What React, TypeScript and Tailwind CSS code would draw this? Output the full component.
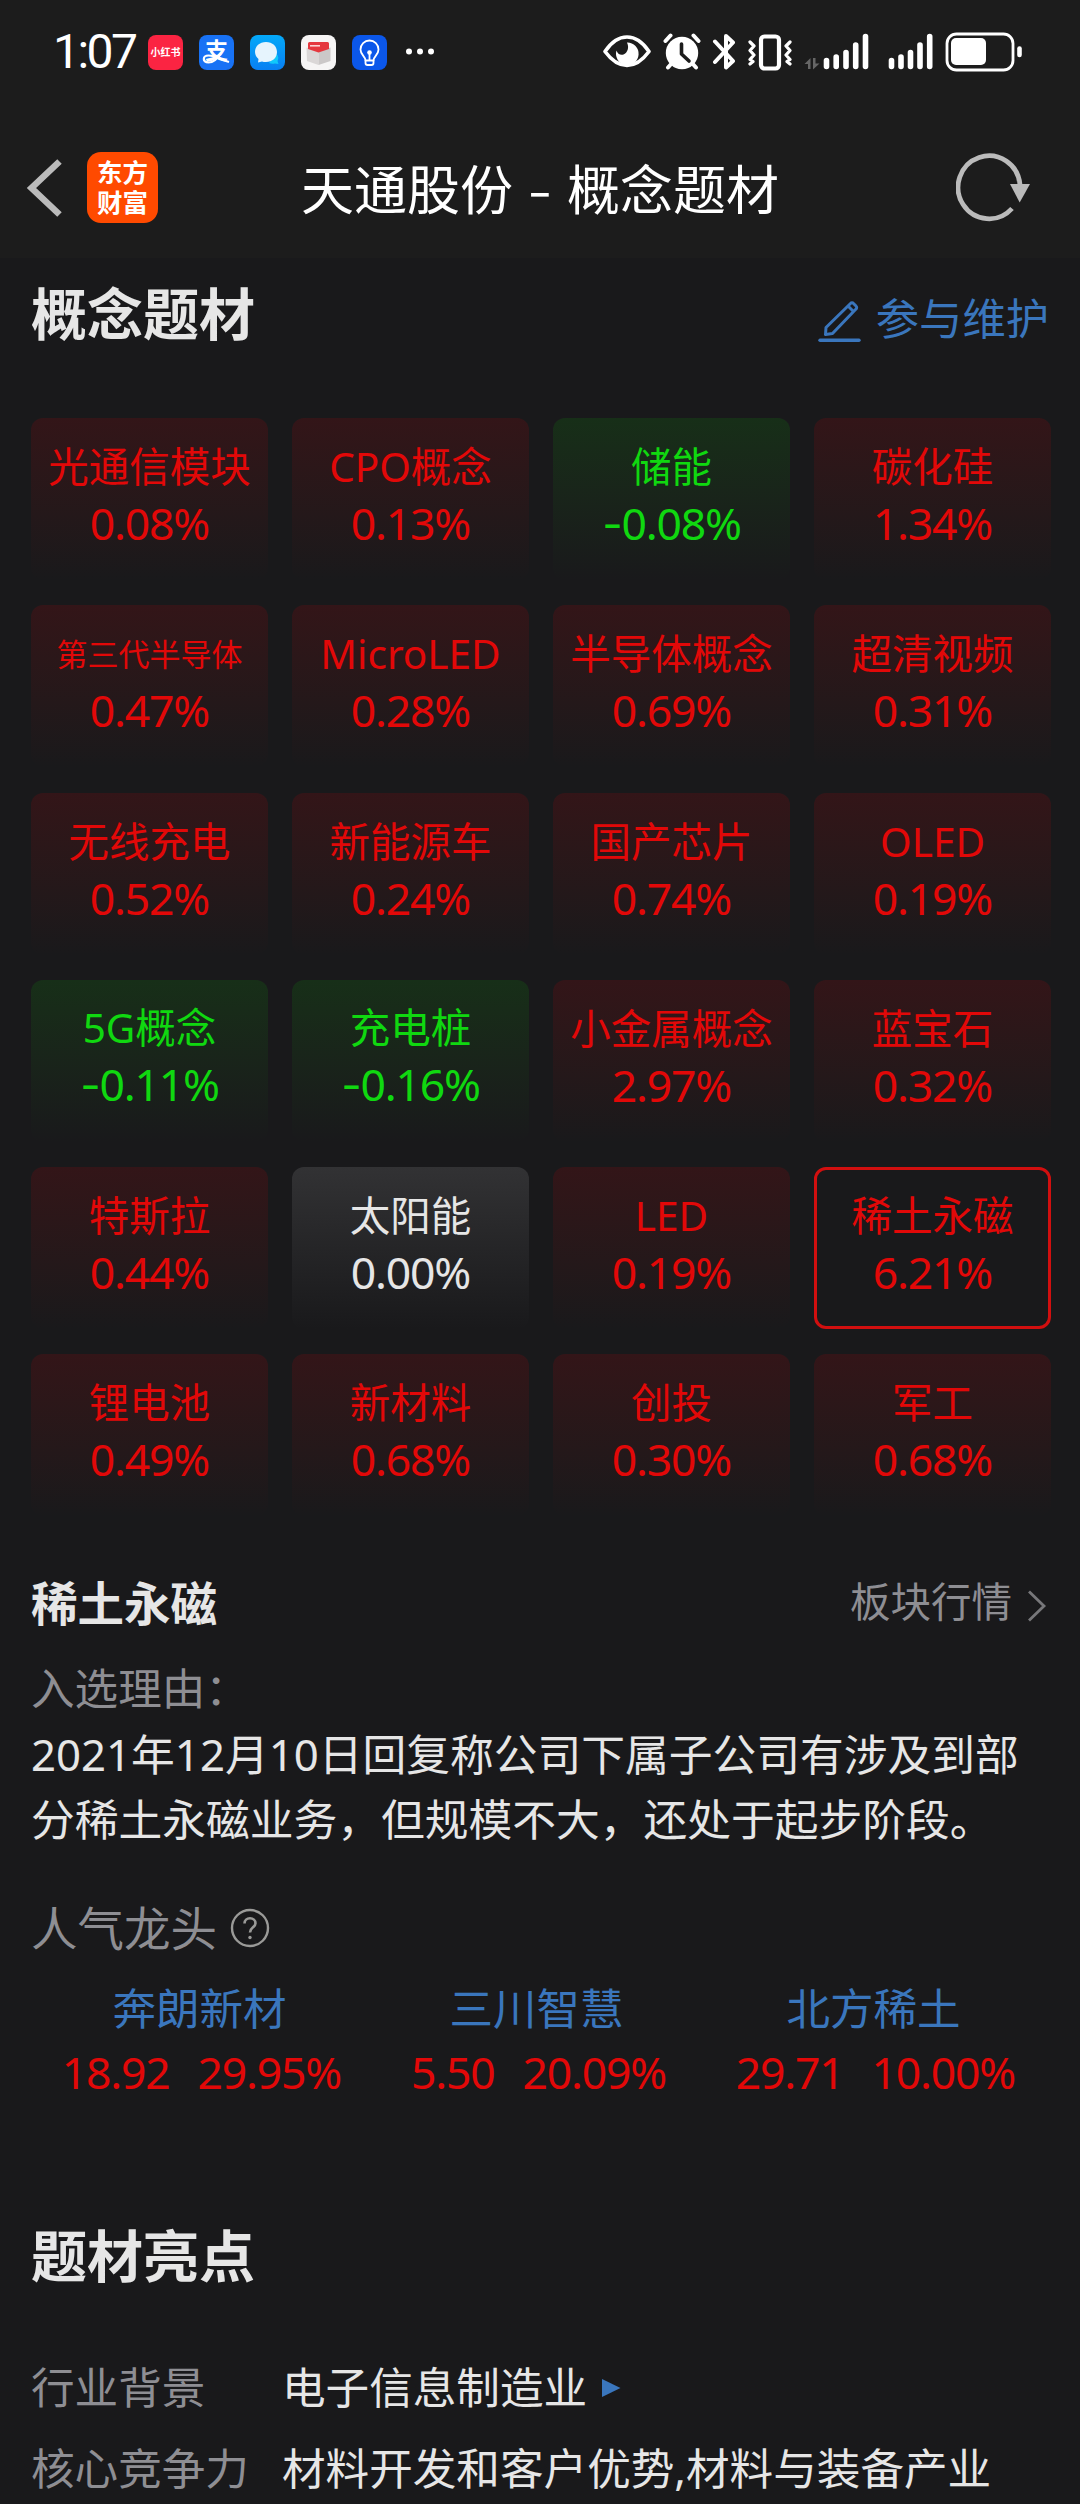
import React from "react";

type Concept = {
  name: string;
  change: string;
  small?: boolean;
  selected?: boolean;
};

const concepts: Concept[] = [
  { name: "光通信模块", change: "0.08%" },
  { name: "CPO概念", change: "0.13%" },
  { name: "储能", change: "-0.08%" },
  { name: "碳化硅", change: "1.34%" },
  { name: "第三代半导体", change: "0.47%", small: true },
  { name: "MicroLED", change: "0.28%" },
  { name: "半导体概念", change: "0.69%" },
  { name: "超清视频", change: "0.31%" },
  { name: "无线充电", change: "0.52%" },
  { name: "新能源车", change: "0.24%" },
  { name: "国产芯片", change: "0.74%" },
  { name: "OLED", change: "0.19%" },
  { name: "5G概念", change: "-0.11%" },
  { name: "充电桩", change: "-0.16%" },
  { name: "小金属概念", change: "2.97%" },
  { name: "蓝宝石", change: "0.32%" },
  { name: "特斯拉", change: "0.44%" },
  { name: "太阳能", change: "0.00%" },
  { name: "LED", change: "0.19%" },
  { name: "稀土永磁", change: "6.21%", selected: true },
  { name: "锂电池", change: "0.49%" },
  { name: "新材料", change: "0.68%" },
  { name: "创投", change: "0.30%" },
  { name: "军工", change: "0.68%" },
];

const leaders = [
  { name: "奔朗新材", price: "18.92", change: "29.95%" },
  { name: "三川智慧", price: "5.50", change: "20.09%" },
  { name: "北方稀土", price: "29.71", change: "10.00%" },
];

const cardColor = ({ change, selected }: Concept) => {
  if (selected) return "border-[3px] border-[#d20f0f] text-[#e20808]";
  if (change.startsWith("-"))
    return "bg-linear-to-b from-[#172f18] to-[#19191b] text-[#10d810]";
  if (change === "0.00%")
    return "bg-linear-to-b from-[#323234] to-[#19191b] text-[#e6e6e6]";
  return "bg-linear-to-b from-[#331518] to-[#19191b] text-[#e20808]";
};

const ConceptCard = (item: Concept) => (
  <div
    className={`flex h-[162px] flex-col items-center justify-center rounded-xl pb-[8px] whitespace-nowrap ${cardColor(item)}`}
  >
    <span
      className={`leading-[56px] ${item.small ? "text-[31px]" : "text-[40.5px]"}`}
    >
      {item.name}
    </span>
    <span className="text-[44.5px] leading-[56px] tracking-[-1.2px]">
      {item.change.startsWith("-") && <span className="font-[Inter]">-</span>}
      {item.change.replace("-", "")}
    </span>
  </div>
);

const AppIcons = () => (
  <div className="ml-[13px] flex items-center gap-4">
    <div className="flex size-[35px] items-center justify-center rounded-lg bg-[#fb2442] text-[10px] font-bold whitespace-nowrap text-white">
      小红书
    </div>
    <div className="relative flex size-[35px] items-start justify-center rounded-lg bg-[#1872f5] pt-[3px] text-[23px] leading-[25px] font-bold text-white">
      支
      <svg className="absolute inset-0 size-[35px]" viewBox="0 0 35 35" fill="none">
        <path
          d="M22 18c-3 5-7 9.500-12.500 9.500-6.500 0-6-7 0-7 7 0 12 4 20.500 6.500"
          stroke="#fff"
          strokeWidth="2.200"
        />
      </svg>
    </div>
    <svg className="size-[35px]" viewBox="0 0 35 35">
      <defs>
        <linearGradient id="chat" x1="0" y1="0" x2="0" y2="1">
          <stop offset="0" stopColor="#04a9f9" />
          <stop offset="1" stopColor="#087ff2" />
        </linearGradient>
      </defs>
      <rect width="35" height="35" rx="8" fill="url(#chat)" />
      <path d="M19 28a7 5 0 0 0 6 .500l3.500.500-1-3a6 6 0 0 0-1-7z" fill="#10c8fb" />
      <path
        d="M16 7c6.500 0 11 4.300 11 10s-4.500 10-11 10c-1.500 0-3 0-4-.600L8 27.500l.500-3.500A9.800 9.800 0 0 1 5 17C5 11.300 9.500 7 16 7z"
        fill="#e6f4fd"
      />
    </svg>
    <svg className="size-[35px]" viewBox="0 0 35 35">
      <rect width="35" height="35" rx="8" fill="#f6f5f5" />
      <path d="M5.500 12.500l12 4v13.500L6 26z" fill="#dad7d7" />
      <path d="M17.500 16.500l12-4V26l-12 4z" fill="#cbc8c8" />
      <path d="M7 8.500a1.500 1.500 0 0 1 1.500-1.500h18A1.500 1.500 0 0 1 28 8.500V14l-10.500 3.500L7 14z" fill="#e5383f" />
      <path d="M9 10.800h10" stroke="#fbd3d4" strokeWidth="1.600" />
    </svg>
    <svg className="size-[35px]" viewBox="0 0 35 35" fill="none">
      <rect width="35" height="35" rx="8" fill="#0b57ea" />
      <g stroke="#fff" strokeWidth="1.800" strokeLinecap="round" strokeLinejoin="round">
        <path d="M13.500 25.500c0-4-5-5.500-5-11a9 9 0 0 1 18 0c0 5.500-5 7-5 11z" />
        <path d="M17.500 18v7M13.500 25.500v2.500a2 2 0 0 0 2 2h4a2 2 0 0 0 2-2v-2.500" />
      </g>
      <circle cx="17.500" cy="17.500" r="2.300" fill="#fff" />
    </svg>
  </div>
);

const StatusBar = () => (
  <div className="flex h-[104px] items-center pr-[57px] pl-[53px] text-white">
    <span className="w-[82px] text-[48px] leading-none tracking-[-2.5px] font-[Roboto]">
      1:07
    </span>
    <AppIcons />
    <svg className="ml-[19px] h-10 w-7" viewBox="406 32 28 40" fill="#fff">
      <circle cx="409" cy="51.500" r="3" />
      <circle cx="420" cy="51.500" r="3" />
      <circle cx="431" cy="51.500" r="3" />
    </svg>
    <div className="ml-auto flex items-center">
      {/* eye comfort */}
      <svg className="h-10 w-[50px]" viewBox="601 32 50 40" fill="none">
        <path
          d="M605 51.500C612 41 619 37 627 37s15 4 22 14.500C642 61 635 65.500 627 65.500S612 61 605 51.500z"
          stroke="#fff"
          strokeWidth="3.600"
          strokeLinejoin="round"
        />
        <path
          d="M627 42.500a11.300 11.300 0 1 1-10.500 8c1 3.500 4 5 7 4 4-1.500 6-7 3.500-12z"
          fill="#fff"
        />
      </svg>
      {/* alarm */}
      <svg className="ml-[11px] h-10 w-[39px]" viewBox="662 32 39 40" fill="none">
        <circle cx="682" cy="53" r="16.200" fill="#fff" />
        <path
          d="M665.500 41l5-5.500M698.500 41l-5-5.500M672 63l-4 4.500M692 63l4 4.500"
          stroke="#fff"
          strokeWidth="4"
          strokeLinecap="round"
        />
        <path
          d="M681.500 44v10l7.500 7"
          stroke="#1c1c1c"
          strokeWidth="3.600"
          strokeLinecap="round"
          strokeLinejoin="round"
        />
      </svg>
      {/* bluetooth */}
      <svg className="ml-[10px] h-10 w-6" viewBox="711 32 24 40" fill="none">
        <path
          d="M715 41.500l18 19.500-7 6.500V36l7 6.500-18 19.500"
          stroke="#fff"
          strokeWidth="4"
          strokeLinecap="round"
          strokeLinejoin="round"
        />
      </svg>
      {/* vibrate */}
      <svg className="ml-[11px] h-10 w-[46px]" viewBox="746 32 46 40" fill="none">
        <g stroke="#fff" strokeLinejoin="round" strokeLinecap="round">
          <rect x="761" y="36.500" width="18" height="32" rx="3.500" strokeWidth="4.200" />
          <path
            d="M750 42l4 4-4 4.500 4 4.500-4 4.500 3 2-3 2.500M790 42l-4 4 4 4.500-4 4.500 4 4.500-3 2 3 2.500"
            strokeWidth="3.200"
          />
        </g>
      </svg>
      {/* mobile signal, both cards */}
      <svg className="ml-3 h-10 w-[66px]" viewBox="804 32 66 40" fill="none">
        <path d="M804.500 64l6-6v11h-2.500v-5zM813 58h2.500v5.500h4l-6.500 6z" fill="#666" />
        <path
          d="M826.500 60.500v6M836.200 57v9.500M846 52.500v14M855.700 45v21.500M865.500 36.500v30"
          stroke="#fff"
          strokeWidth="5.600"
          strokeLinecap="round"
        />
      </svg>
      <svg className="ml-[18px] h-10 w-[46px]" viewBox="888 32 46 40" fill="none">
        <path
          d="M891.500 60.500v6M901 57v9.500M910.500 52.500v14M920 45v21.500M929.700 36.500v30"
          stroke="#fff"
          strokeWidth="5.600"
          strokeLinecap="round"
        />
      </svg>
      {/* battery */}
      <svg className="ml-[11px] h-10 w-[78px]" viewBox="945 32 78 40" fill="none">
        <rect x="947" y="34" width="66" height="36" rx="9.500" stroke="#fff" strokeWidth="2.800" />
        <rect x="951" y="38" width="35" height="27" rx="5" fill="#fff" />
        <path d="M1019.500 48.500v6.500" stroke="#fff" strokeWidth="4.600" strokeLinecap="round" />
      </svg>
    </div>
  </div>
);

const NavBar = () => (
  <div className="relative flex h-[154px] items-center justify-between pt-[13px] pr-[48px] pl-[26px]">
    <div className="flex items-center">
      <svg className="h-[62px] w-[38px]" viewBox="26 157 38 62" fill="none">
        <path d="M59.500 161.500L31.500 188l28 26.500" stroke="#bbb" strokeWidth="6.500" />
      </svg>
      <div className="ml-[23px] flex size-[71px] flex-col items-center justify-center rounded-[14px] bg-[#ff4a00] pb-[2px] text-[25.5px] leading-[30px] font-bold text-white">
        <span>东方</span>
        <span>财富</span>
      </div>
    </div>
    <h1 className="absolute inset-x-0 pt-[2px] text-center text-[53px] leading-none text-white">
      天通股份 <span className="relative top-[3px] text-[58px] leading-none font-[Inter] font-light">-</span> 概念题材
    </h1>
    <svg className="h-[72px] w-[76px]" viewBox="956 152 76 72" fill="none">
      <path
        d="M1020 185a31 31.500 0 1 0-8 23.500"
        stroke="#bbb"
        strokeWidth="4.800"
      />
      <path d="M1010 184h20l-10.300 18.500z" fill="#bbb" />
    </svg>
  </div>
);

const App = () => (
  <div className="h-[2504px] w-[1080px] overflow-hidden bg-[#19191b] font-['Noto_Sans','Noto_Sans_CJK_SC',sans-serif] text-[#e6e6e6]">
    <header className="bg-[#1c1c1c]">
      <StatusBar />
      <NavBar />
    </header>

    <main className="pr-[29px] pl-[31px]">
      <div className="flex h-[160px] items-start justify-between pt-[15px]">
        <h2 className="text-[56px] leading-[80px] font-bold">概念题材</h2>
        <div className="flex items-center pt-px pr-[2px] text-[43.3px] leading-[90px] text-[#3a76bd]">
          <svg className="mt-[6px] mr-[15px] h-[42px] w-[43px]" viewBox="818 301 43 42" fill="none">
            <path
              d="M825.500 334.500l.500-7 24.500-24a2 2 0 0 1 3 0l2.500 2.500a2 2 0 0 1 0 3l-23.500 24.500zM848 306l5.500 5.500"
              stroke="#3a76bd"
              strokeWidth="3"
              strokeLinejoin="round"
            />
            <path d="M820 340.300h39" stroke="#3a76bd" strokeWidth="3.400" strokeLinecap="round" />
          </svg>
          参与维护
        </div>
      </div>

      <div className="grid grid-cols-4 gap-x-6 gap-y-[25.3px]">
        {concepts.map((item) => (
          <ConceptCard key={item.name} {...item} />
        ))}
      </div>

      <section className="pt-[57px]">
        <div className="flex h-[60px] items-center justify-between">
          <h3 className="text-[46.500px] leading-none font-bold">稀土永磁</h3>
          <div className="flex items-center pr-1 text-[40.500px] leading-none text-[#8e8e93]">
            <span className="pb-[2px]">板块行情</span>
            <svg className="mt-[5px] ml-[15px] h-8 w-5" viewBox="1028 1590 20 32" fill="none">
              <path d="M1030 1591.500l15 14.500-15 14.500" stroke="#77777a" strokeWidth="2.800" />
            </svg>
          </div>
        </div>
        <p className="mt-[23px] text-[43.600px] leading-[64px] text-[#8e8e93]">入选理由：</p>
        <p className="mt-[2px] text-[43.750px] leading-[65px] whitespace-nowrap">
          2021年12月10日回复称公司下属子公司有涉及到部
          <br />
          分稀土永磁业务，但规模不大，还处于起步阶段。
        </p>

        <div className="mt-[45px] flex h-[62px] items-center text-[46.500px] leading-none text-[#8e8e93]">
          人气龙头
          <svg className="ml-[13px] size-10" viewBox="0 0 40 40" fill="none">
            <circle cx="20" cy="20" r="18" stroke="#9a9a98" strokeWidth="2.400" />
            <path
              d="M14.500 15.500c0-3.200 2.400-5.200 5.500-5.200s5.500 2 5.500 5c0 4.200-5.500 4-5.500 9.200"
              stroke="#9a9a98"
              strokeWidth="2.600"
            />
            <circle cx="20" cy="29.500" r="1.700" fill="#9a9a98" />
          </svg>
        </div>

        <div className="mt-[17px] grid w-[1011px] grid-cols-3">
          {leaders.map((item) => (
            <div key={item.name} className="flex flex-col items-center leading-[64px]">
              <span className="text-[43.500px] text-[#3a76bd]">{item.name}</span>
              <div className="flex gap-[28px] pl-1 text-[44.500px] tracking-[-1.2px] text-[#e20808]">
                <span>{item.price}</span>
                <span>{item.change}</span>
              </div>
            </div>
          ))}
        </div>
      </section>

      <section className="pt-[111px]">
        <h2 className="text-[56px] leading-[80px] font-bold">题材亮点</h2>
        <div className="mt-[52px] text-[43.600px] leading-[81px] whitespace-nowrap">
          <div className="flex">
            <span className="w-[251px] text-[#8e8e93]">行业背景</span>
            <span>电子信息制造业</span>
            <svg className="mt-[31px] ml-[15px] h-5 w-[19px]" viewBox="0 0 19 20">
              <path d="M0 1v18l18.500-9z" fill="#3a76bd" />
            </svg>
          </div>
          <div className="flex">
            <span className="w-[251px] text-[#8e8e93]">核心竞争力</span>
            <span>材料开发和客户优势,材料与装备产业</span>
          </div>
        </div>
      </section>
    </main>
  </div>
);

export default App;
